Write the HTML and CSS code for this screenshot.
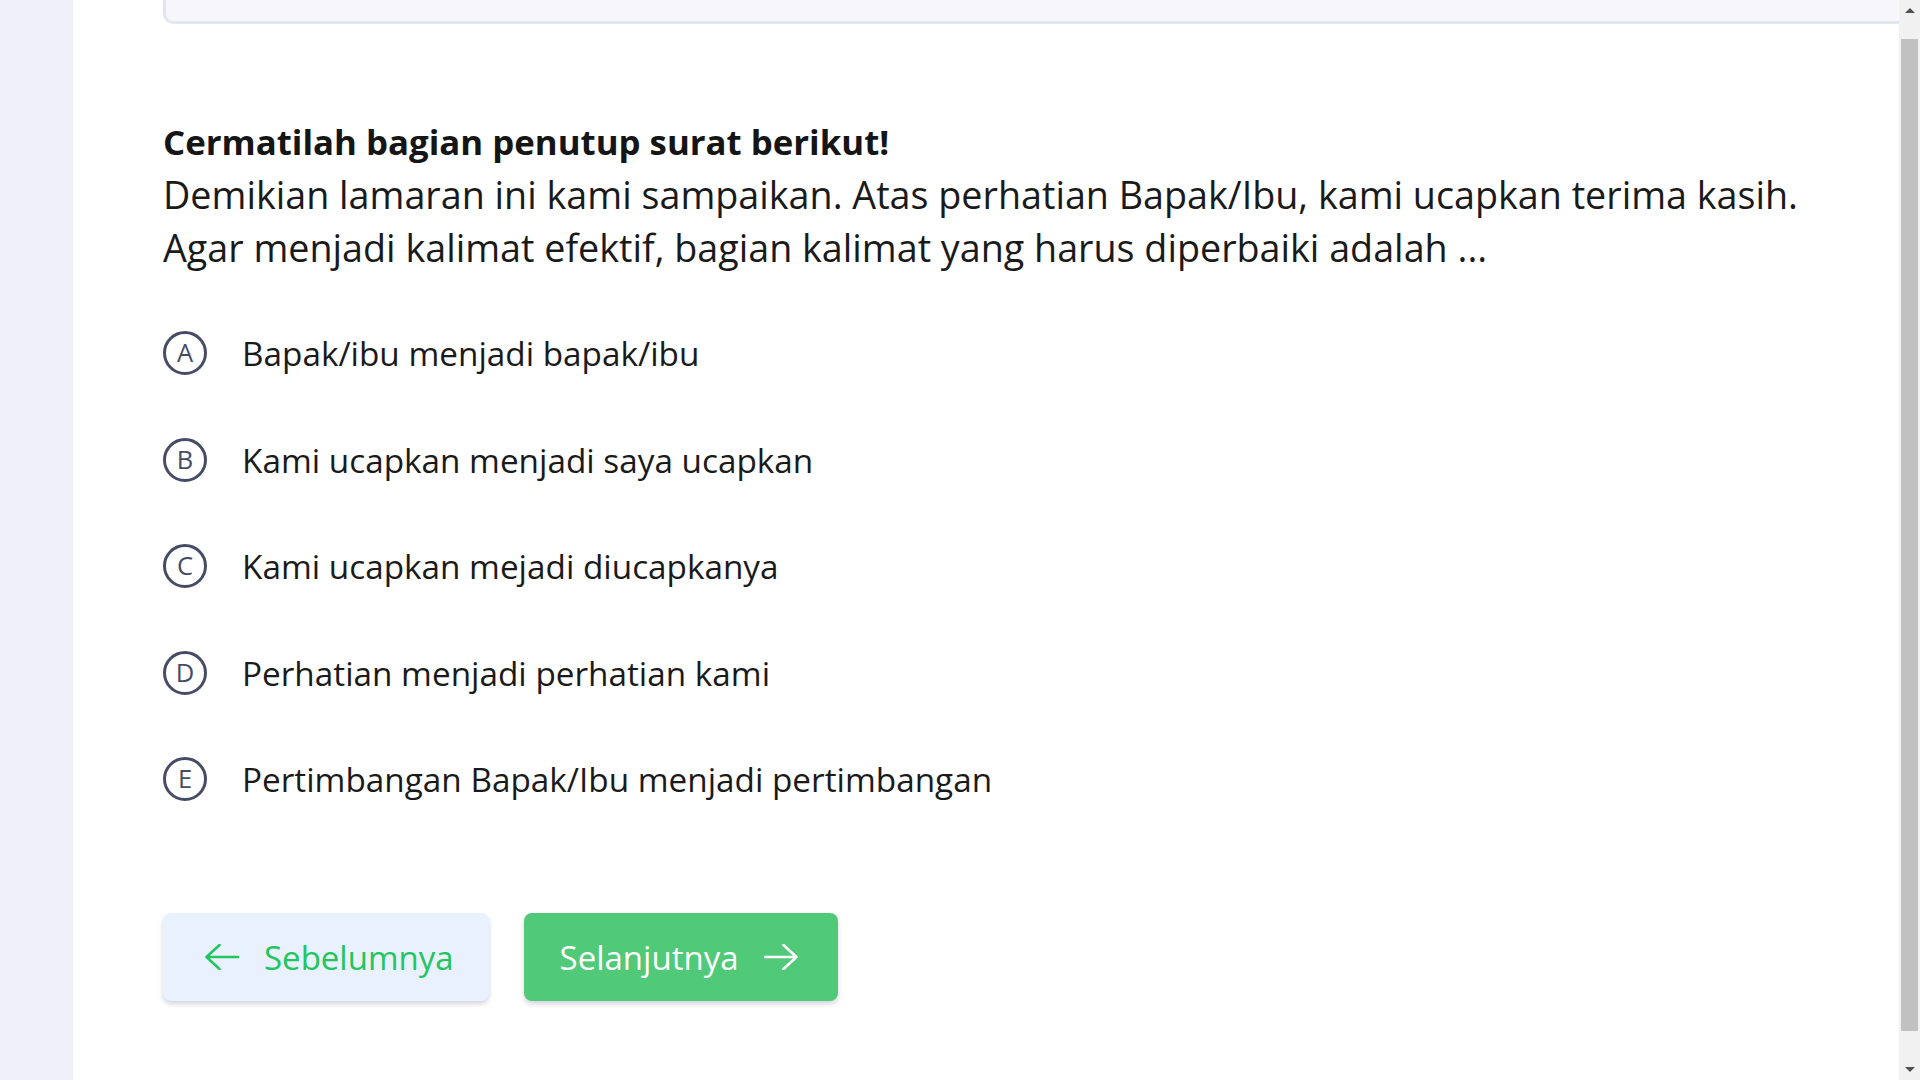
FILE: index.html
```html
<!DOCTYPE html>
<html lang="id">
<head>
<meta charset="utf-8">
<title>Soal</title>
<link rel="stylesheet" href="styles.css">
</head>
<body>
<div class="app">
  <aside class="sidebar"></aside>
  <main class="main">
    <div class="top-card"></div>
    <section class="question">
      <h2 class="q-title">Cermatilah bagian penutup surat berikut!</h2>
      <p class="q-text">Demikian lamaran ini kami sampaikan. Atas perhatian Bapak/Ibu, kami ucapkan terima kasih.<br>Agar menjadi kalimat efektif, bagian kalimat yang harus diperbaiki adalah ...</p>
    </section>
    <ul class="options">
      <li class="option"><span class="opt-letter">A</span><span class="opt-text">Bapak/ibu menjadi bapak/ibu</span></li>
      <li class="option"><span class="opt-letter">B</span><span class="opt-text">Kami ucapkan menjadi saya ucapkan</span></li>
      <li class="option"><span class="opt-letter">C</span><span class="opt-text">Kami ucapkan mejadi diucapkanya</span></li>
      <li class="option"><span class="opt-letter">D</span><span class="opt-text">Perhatian menjadi perhatian kami</span></li>
      <li class="option"><span class="opt-letter">E</span><span class="opt-text">Pertimbangan Bapak/Ibu menjadi pertimbangan</span></li>
    </ul>
    <div class="nav">
      <button class="btn btn-prev">
        <svg class="arrow" viewBox="0 0 34 26" width="34" height="26"><path d="M1.5 13H33M14.5 1L1.5 13L14.5 25" fill="none" stroke="currentColor" stroke-width="2.6" stroke-linecap="round" stroke-linejoin="round"/></svg>
        <span>Sebelumnya</span>
      </button>
      <button class="btn btn-next">
        <span>Selanjutnya</span>
        <svg class="arrow" viewBox="0 0 34 26" width="34" height="26"><path d="M1 13H32.5M19.5 1L32.5 13L19.5 25" fill="none" stroke="currentColor" stroke-width="2.6" stroke-linecap="round" stroke-linejoin="round"/></svg>
      </button>
    </div>
  </main>
  <div class="scrollbar">
    <div class="sb-btn"><span class="tri-up"></span></div>
    <div class="sb-track"><div class="sb-thumb"></div></div>
    <div class="sb-btn"><span class="tri-down"></span></div>
  </div>
</div>
</body>
</html>
```
FILE: styles.css
```css
html, body {
  margin: 0;
  padding: 0;
  height: 100%;
  overflow: hidden;
}
body {
  font-family: "Open Sans", "Noto Sans", sans-serif;
  color: #1a1a1a;
  background: #ffffff;
}
.app {
  display: flex;
  height: 1080px;
}
.sidebar {
  width: 73px;
  flex: none;
  background: #efeff9;
}
.main {
  flex: 1;
  min-width: 0;
  padding-left: 90px;
  display: flex;
  flex-direction: column;
  align-items: flex-start;
}
.top-card {
  align-self: stretch;
  height: 21px;
  background: #f6f6fb;
  border: 3px solid #e3e5f0;
  border-top: none;
  border-right: none;
  border-radius: 0 0 0 10px;
}
.question {
  margin-top: 91px;
}
.q-title {
  margin: 0;
  font-size: 34.8px;
  font-weight: 700;
  line-height: 53px;
  color: #151515;
}
.q-text {
  margin: 0;
  font-size: 37.7px;
  font-weight: 400;
  line-height: 53px;
  color: #1a1a1a;
}
.options {
  list-style: none;
  margin: 57px 0 0;
  padding: 0;
  display: flex;
  flex-direction: column;
  gap: 62.5px;
}
.option {
  display: flex;
  align-items: center;
  height: 44px;
}
.opt-letter {
  width: 44px;
  height: 44px;
  box-sizing: border-box;
  border: 3px solid #474c66;
  border-radius: 50%;
  display: flex;
  align-items: center;
  justify-content: center;
  font-size: 25.5px;
  color: #474c66;
  line-height: 1;
  flex: none;
}
.opt-text {
  margin-left: 35px;
  font-size: 33.3px;
  line-height: 44px;
  color: #1a1a1a;
}
.nav {
  margin-top: 112px;
  display: flex;
  gap: 35px;
}
.btn {
  height: 88px;
  border: none;
  border-radius: 8px;
  display: flex;
  align-items: center;
  gap: 25px;
  font-family: "Open Sans", "Noto Sans", sans-serif;
  font-size: 33px;
  cursor: pointer;
  box-shadow: 0 3px 5px rgba(60, 60, 110, 0.22);
}
.btn-prev {
  background: #e8f1fd;
  color: #22c55e;
  padding: 0 35px 0 42px;
}
.btn-next {
  background: #50c979;
  color: #ffffff;
  padding: 0 40px 0 36px;
}
.arrow {
  display: block;
  flex: none;
}
.scrollbar {
  width: 21px;
  flex: none;
  background: #f1f1f1;
  display: flex;
  flex-direction: column;
}
.sb-btn {
  height: 21px;
  flex: none;
  display: flex;
  align-items: center;
  justify-content: center;
}
.sb-track {
  flex: 1;
  padding: 18px 2px 28px;
  display: flex;
}
.sb-thumb {
  flex: 1;
  background: #c1c1c1;
}
.tri-up {
  width: 0;
  height: 0;
  border-left: 5px solid transparent;
  border-right: 5px solid transparent;
  border-bottom: 5px solid #505050;
}
.tri-down {
  width: 0;
  height: 0;
  border-left: 5px solid transparent;
  border-right: 5px solid transparent;
  border-top: 5px solid #505050;
}
```
